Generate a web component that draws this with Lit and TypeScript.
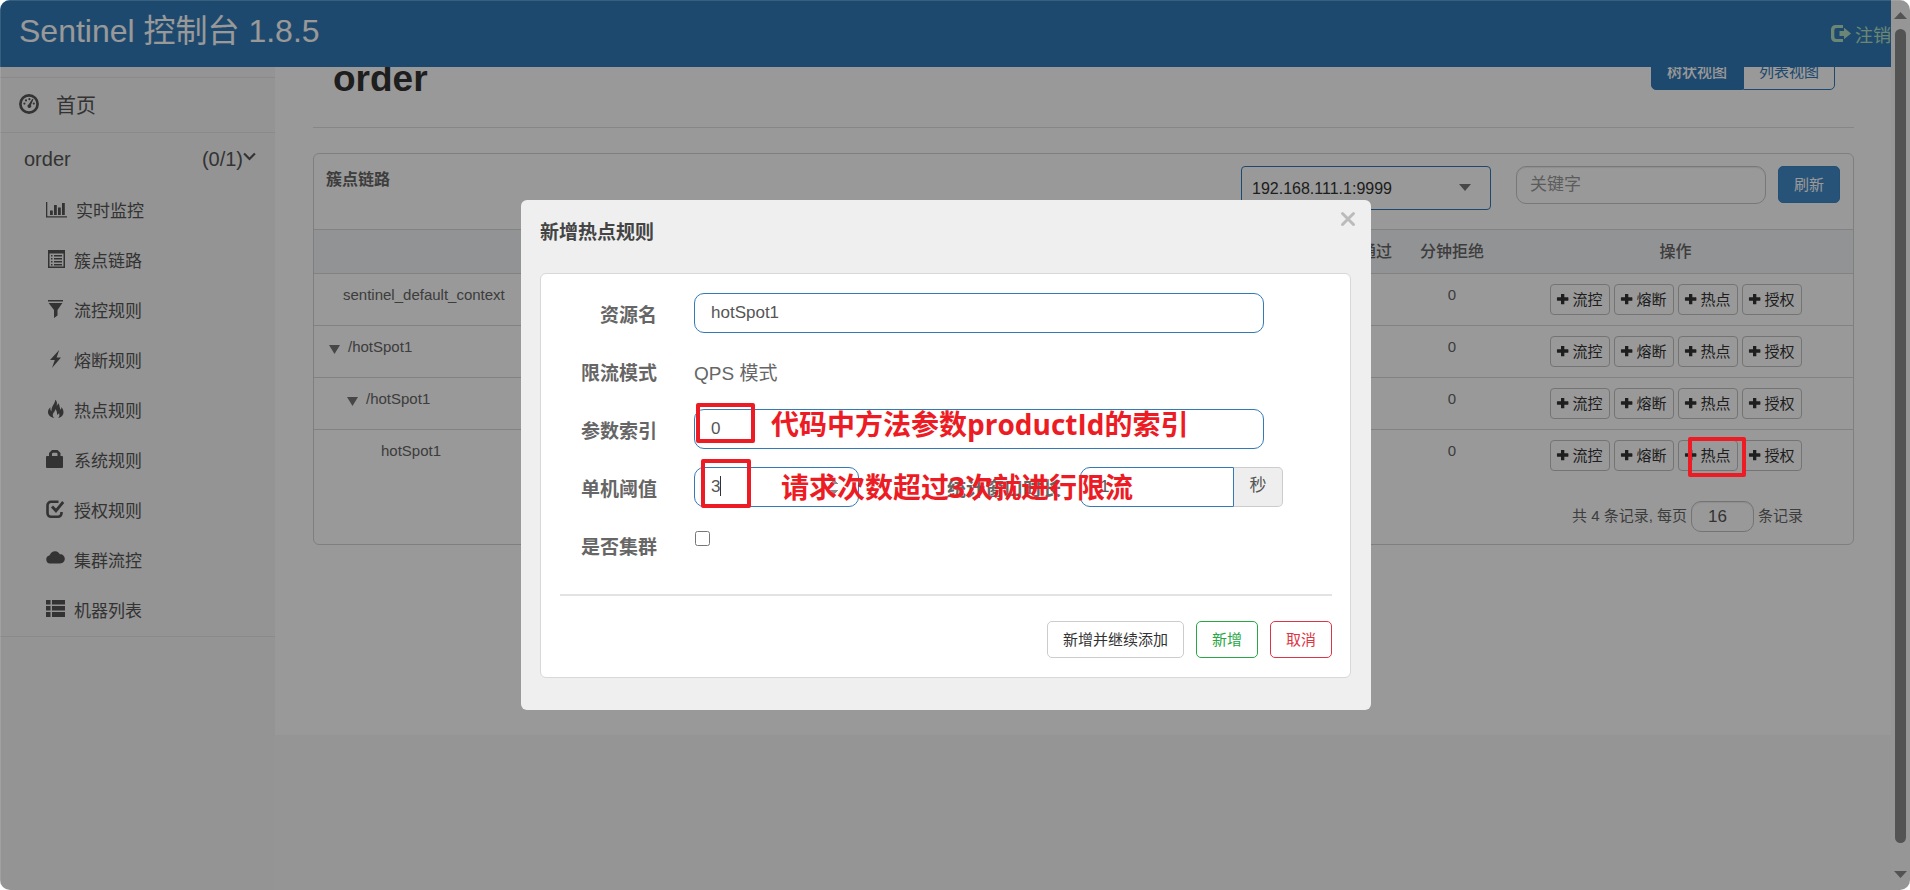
import { LitElement, html, css, svg } from "lit";
import { customElement, state } from "lit/decorators.js";

const cjk = css`"Liberation Sans", "Noto Sans CJK SC", sans-serif`;

const icons = {
  dashboard: svg`<circle cx="10" cy="10" r="8.6" fill="none" stroke="currentColor" stroke-width="2.7"/><circle cx="5.4" cy="9.6" r="1.1"/><circle cx="7" cy="6.4" r="1.1"/><circle cx="10.4" cy="5.2" r="1.1"/><circle cx="14.8" cy="9.6" r="1.1"/><path d="M13.4 4.8l1 .6-2.4 5.6a1.9 1.9 0 1 1-2.2-.8z"/>`,
  chart: svg`<path d="M0 3h1.3v14.2H21v1.3H0zM4 11.5h2.8V16H4zM8 6h2.8v10H8zM12 8.5h2.8V16H12zM16 4h2.8v12H16z"/>`,
  list: svg`<path fill-rule="evenodd" d="M2 1h17v18H2zM3.5 4.5v13h14v-13zM5 6h1.5v1.5H5zM8 6h8v1.5H8zM5 9h1.5v1.5H5zM8 9h8v1.5H8zM5 12h1.5v1.5H5zM8 12h8v1.5H8zM5 15h1.5v1.5H5zM8 15h8v1.5H8z"/>`,
  filter: svg`<path d="M2 1h15v1.6H2zM2.6 4h13.8l-4.9 7v5.6L8 19v-8z"/>`,
  flash: svg`<path d="M13.2 1L4 11h4.8L6 19l9-10.5h-4.4z"/>`,
  fire: svg`<path d="M8.500 19C4.800 18.600 2 16.400 2 13c0-2.200 1.200-3.600 2.400-4.800C4.200 10 4.400 11.400 5.500 12.300 5.200 7.500 8.800 5 9.300.8c2.400 2.200 1.600 4.400 1.400 6 .9-.6 1.300-1.600 1.300-2.800 2 2 1.300 4.600 2.600 6.800.7-.7.9-1.700.7-2.800 1.500 1.500 2.200 3.400 2.200 5.300 0 3-2.200 5.200-5.400 5.700 1.400-1.400 1.700-3 .9-4.800-.5.900-1.200 1.300-2 1.500.2-2.300-.2-4-1.800-5.700.2 2.600-2.400 3.600-2.400 6.200 0 1.100.6 2 1.700 2.800z"/>`,
  lock: svg`<path fill-rule="evenodd" d="M3 7V4l3-3h5.500l3 3v3H16a1 1 0 0 1 1 1v10a1 1 0 0 1-1 1H1a1 1 0 0 1-1-1V8a1 1 0 0 1 1-1zm3 0h5.500V4.500l-.8-.8H6.800L6 4.500z"/>`,
  check: svg`<path fill="none" stroke="currentColor" stroke-width="2.600" d="M12.500 2.800H5A3.500 3.500 0 0 0 1.500 6.300v8A3.500 3.500 0 0 0 5 17.800h7a3.500 3.500 0 0 0 3.500-3.500V13"/><path d="M5 8.500L7 6.600l3 2.800L16.200 2 18.200 4 10 14z"/>`,
  cloud: svg`<path d="M4 14.500A4 4 0 0 1 3.400 6.600C4.800 3.500 7 2 9.300 2.200c2.200.2 3.800 1.600 4.500 3 2.600-.5 5 1.800 5 4.600 0 2.600-2 4.700-4.800 4.700z"/>`,
  rows: svg`<path d="M0 1h4.500v4.500H0zM6 1h13v4.500H6zM0 7h4.500v4.500H0zM6 7h13v4.500H6zM0 13h4.500v5H0zM6 13h13v5H6z"/>`,
  logout: svg`<path fill-rule="evenodd" d="M12.500 1H5a4.500 4.500 0 0 0-4.500 4.500v8A4.500 4.500 0 0 0 5 18h7.500v-3H6a2.200 2.200 0 0 1-2.200-2.200V6.200A2.200 2.200 0 0 1 6 4h6.500zM13.500 3.700L20.500 9.500l-7 5.800V12H9V7h4.500z"/>`,
  plus: svg`<path d="M7.500 2.500h5v5H18a.6.6 0 0 1 .6.6v3.800a.6.6 0 0 1-.6.600h-5.500v5.500H7.500V12.500H2a.6.6 0 0 1-.6-.6V8.100A.6.6 0 0 1 2 7.500h5.500z"/>`,
};

const icon = (name: keyof typeof icons, cls = "icon") =>
  html`<svg class=${cls} viewBox="0 0 21 20" fill="currentColor" aria-hidden="true">${icons[name]}</svg>`;

const base = css`
  *, *::before, *::after { box-sizing: border-box; }
  button, input, select { font-family: inherit; margin: 0; color: inherit; }
  button { display: flex; align-items: center; justify-content: center; cursor: pointer; white-space: nowrap; }
  a { color: inherit; text-decoration: none; }
`;

@customElement("side-nav")
class SideNav extends LitElement {
  static styles = [base, css`
    :host { display: block; width: 275px; flex: none; padding-top: 77px; color: #555; background: #f7f7f7; }
    .home { display: flex; align-items: center; gap: 16px; height: 56px; padding: 0 19px 2px; border-top: 1px solid #e7e7e7; border-bottom: 1px solid #e7e7e7; font-size: 20px; }
    .group { display: flex; align-items: center; height: 53px; padding: 0 19px 0 24px; font-size: 20px; }
    .count { margin-left: auto; }
    .chevron { width: 13px; height: 22px; fill: none; stroke: currentColor; stroke-width: 2; }
    .menu { margin: 0; padding: 0; list-style: none; border-bottom: 1px solid #e7e7e7; }
    .link { display: flex; align-items: center; gap: 7px; height: 50px; padding: 0 0 4px 46px; font-size: 17px; }
    .wide { gap: 9px; }
    .icon { width: 21px; height: 20px; }
  `];

  private items: [keyof typeof icons, string][] = [
    ["chart", "实时监控"], ["list", "簇点链路"], ["filter", "流控规则"],
    ["flash", "熔断规则"], ["fire", "热点规则"], ["lock", "系统规则"],
    ["check", "授权规则"], ["cloud", "集群流控"], ["rows", "机器列表"],
  ];

  render() {
    return html`
      <nav>
        <a class="home" href="#home">${icon("dashboard")}<span>首页</span></a>
        <a class="group" href="#order"><span>order</span><span class="count">(0/1)</span>
          <svg class="chevron" viewBox="0 0 12 20" aria-hidden="true"><path d="M1 4l5 5 5-5"/></svg></a>
        <ul class="menu">
          ${this.items.map(([name, label]) => html`
            <li><a class="link ${name === "chart" ? "wide" : ""}" href="#${name}">${icon(name)}<span>${label}</span></a></li>`)}
        </ul>
      </nav>`;
  }
}

@customElement("resource-page")
class ResourcePage extends LitElement {
  static styles = [base, css`
    :host { display: block; flex: 1; min-width: 0; align-self: flex-start; background: #fff; color: #666; padding: 54px 37px 190px 38px; font-size: 15px; }
    .heading { display: flex; justify-content: space-between; align-items: flex-start; padding: 0 19px 37px 20px; border-bottom: 1px solid #e0e0e0; }
    .title { margin: 0; font-size: 37px; line-height: 50px; height: 36px; color: #333; }
    .views { display: flex; }
    .view { height: 36px; padding: 0 15px 4px; font-size: 15px; border: 1px solid #337ab7; border-radius: 0 5px 5px 0; background: #fff; color: #337ab7; }
    .current { border-radius: 5px 0 0 5px; background: #337ab7; color: #fff; font-weight: 500; }
    .panel { margin-top: 25px; border: 1px solid #d4d4d4; border-radius: 6px; }
    .tools { display: flex; align-items: flex-start; height: 75px; padding: 12px 13px 0 12px; }
    .caption { margin: 0 auto 0 0; font-size: 16px; line-height: 28px; font-weight: 700; }
    .pick { position: relative; margin-right: 25px; }
    .machine { appearance: none; width: 250px; height: 44px; padding: 0 10px; border: 1px solid #337ab7; border-radius: 4px; background: #fff; color: #333; font-size: 16px; }
    .caret { position: absolute; right: 20px; top: 18px; width: 12px; height: 7px; fill: #777; pointer-events: none; }
    .keyword { width: 250px; height: 38px; margin-right: 12px; padding: 0 13px; border: 1px solid #c8c8c8; border-radius: 10px; box-shadow: inset 0 1px 1px rgba(0, 0, 0, 0.08); background: #fff; font-size: 17px; }
    .keyword::placeholder { color: #999; opacity: 1; }
    .refresh { width: 62px; height: 37px; padding: 0 0 2px; border: 1px solid #3b85c4; border-radius: 5px; background: #428bca; color: #fff; font-size: 15px; }
    .grid { width: 100%; table-layout: fixed; border-collapse: collapse; }
    .grid th { height: 44px; padding: 0 0 4px; border-top: 1px solid #d9d9d9; background: #f3f5f8; font-size: 16px; font-weight: 500; }
    .grid td { height: 52px; padding: 12px 0 0; border-top: 1px solid #d9d9d9; vertical-align: top; text-align: center; line-height: 18px; }
    .num { width: 92px; }
    .ops { width: 355px; }
    .grid .name { text-align: left; }
    .node { display: flex; align-items: center; gap: 8px; }
    .depth0 { padding-left: 29px; }
    .depth1 { padding-left: 15px; }
    .depth2 { padding-left: 33px; }
    .depth3 { padding-left: 67px; }
    .tri { width: 11px; height: 10px; margin-top: 3px; fill: #777; }
    .grid .actions { padding-top: 10px; }
    .buttons { display: flex; justify-content: center; gap: 4px; }
    .op { gap: 2px; width: 60px; height: 31px; padding: 0 0 2px; border: 1px solid #c2c2c2; border-radius: 4px; background: #fff; color: #333; font-size: 15px; }
    .icon { width: 14px; height: 14px; }
    .pager { display: flex; justify-content: flex-end; align-items: center; gap: 4px; height: 62px; padding: 8px 50px 0 0; }
    .size { width: 63px; height: 31px; padding: 0 18px 0 16px; border: 1px solid #c2c2c2; border-radius: 10px; box-shadow: inset 0 1px 1px rgba(0, 0, 0, 0.08); background: #fff; color: #555; font-size: 17px; }
    .text { padding-bottom: 4px; }
  `];

  private nodes = [
    { name: "sentinel_default_context", depth: 0 },
    { name: "/hotSpot1", depth: 1 },
    { name: "/hotSpot1", depth: 2 },
    { name: "hotSpot1", depth: 3 },
  ];

  render() {
    return html`
      <header class="heading">
        <h1 class="title">order</h1>
        <div class="views"><button class="view current">树状视图</button><button class="view">列表视图</button></div>
      </header>
      <section class="panel">
        <div class="tools">
          <h2 class="caption">簇点链路</h2>
          <div class="pick">
            <select class="machine" aria-label="机器"><option>192.168.111.1:9999</option></select>
            <svg class="caret" viewBox="0 0 12 7"><path d="M0 0h12L6 7z"/></svg>
          </div>
          <input class="keyword" placeholder="关键字" aria-label="关键字">
          <button class="refresh">刷新</button>
        </div>
        <table class="grid">
          <thead><tr><th></th><th class="num">分钟通过</th><th class="num">分钟拒绝</th><th class="ops">操作</th></tr></thead>
          <tbody>
            ${this.nodes.map((n) => html`<tr>
              <td class="name"><div class="node depth${n.depth}">
                ${n.depth === 1 || n.depth === 2 ? html`<svg class="tri" viewBox="0 0 11 10"><path d="M0 1h11L5.500 10z"/></svg>` : ""}
                <span>${n.name}</span></div></td>
              <td></td>
              <td>0</td>
              <td class="actions"><div class="buttons">
                ${["流控", "熔断", "热点", "授权"].map((t) => html`<button class="op">${icon("plus")}<span>${t}</span></button>`)}
              </div></td>
            </tr>`)}
          </tbody>
        </table>
        <div class="pager">
          <label class="text" for="size">共 4 条记录, 每页</label>
          <input id="size" class="size" value="16">
          <span class="text">条记录</span>
        </div>
      </section>`;
  }
}

@customElement("rule-dialog")
class RuleDialog extends LitElement {
  static styles = [base, css`
    :host { display: block; position: relative; width: 850px; padding: 0 20px 32px 19px; border-radius: 6px; background: #efefef; color: #666; font-size: 19px; }
    .top { display: flex; justify-content: space-between; height: 73px; }
    .title { margin: 0; font-size: 19px; line-height: 66px; color: #444; }
    .close { width: 16px; height: 16px; margin: 11px -5px 0 0; padding: 0; border: 0; background: none; }
    .cross { width: 16px; height: 16px; fill: none; stroke: #bbb; stroke-width: 3; stroke-linecap: round; }
    .card { padding: 10px 18px 19px 19px; border: 1px solid #d8d8d8; border-radius: 6px; background: #fff; }
    .row { display: grid; grid-template-columns: 97px 1fr; column-gap: 37px; align-items: center; height: 58px; }
    .label { font-weight: 700; text-align: right; white-space: nowrap; }
    .field { width: 570px; height: 40px; padding: 0 16px 1px; border: 1px solid #337ab7; border-radius: 10px; background: #fff; color: #555; font-size: 17px; outline: 0; }
    .pair { position: relative; display: flex; align-items: center; }
    .count { width: 165px; }
    .count::-webkit-inner-spin-button { opacity: 1; }
    .span { width: 221px; padding-right: 19px; }
    .window { width: 154px; padding-left: 19px; border-radius: 10px 0 0 10px; }
    .unit { width: 49px; height: 40px; line-height: 36px; border: 1px solid #ccc; border-left: 0; border-radius: 0 5px 5px 0; background: #eee; color: #555; font-size: 17px; text-align: center; }
    .cursor { position: absolute; left: 26px; top: 9px; width: 1px; height: 20px; background: #333; }
    .tick { width: 15px; height: 15px; margin: 0 0 14px 1px; }
    .rule { height: 2px; margin: 20px 0 25px; border: 0; background: #e3e3e3; }
    .actions { display: flex; justify-content: flex-end; gap: 12px; }
    .btn { height: 37px; padding: 0 15px 2px; border: 1px solid #ccc; border-radius: 5px; background: #fff; color: #333; font-size: 15px; }
    .ok { border-color: #28a745; color: #28a745; }
    .cancel { border-color: #dc3545; color: #dc3545; }
    .mark { position: absolute; border: 4px solid #ed1c24; border-radius: 2px; }
    .mark-index { left: 175px; top: 203px; width: 59px; height: 40px; }
    .mark-count { left: 180px; top: 259px; width: 50px; height: 49px; }
    .note { position: absolute; margin: 0; color: #ed1c24; font: 700 28px/40px "Open Sans", "Noto Sans CJK SC", sans-serif; white-space: nowrap; }
    .note-index { left: 250px; top: 204px; }
    .note-count { left: 260px; top: 267px; }
  `];

  @state() private resource = "hotSpot1";

  render() {
    return html`
      <header class="top">
        <h2 class="title">新增热点规则</h2>
        <button class="close" aria-label="关闭"><svg class="cross" viewBox="0 0 16 16"><path d="M2.500 2.500l11 11M13.500 2.500l-11 11"/></svg></button>
      </header>
      <form class="card" @submit=${(e: Event) => e.preventDefault()}>
        <div class="row"><label class="label" for="res">资源名</label><input id="res" class="field" .value=${this.resource}></div>
        <div class="row"><span class="label">限流模式</span><span>QPS 模式</span></div>
        <div class="row"><label class="label" for="idx">参数索引</label><input id="idx" class="field" value="0"></div>
        <div class="row"><label class="label" for="cnt">单机阈值</label>
          <div class="pair">
            <input id="cnt" class="field count" type="number" value="3"><i class="cursor"></i>
            <label class="label span" for="win">统计窗口时长</label>
            <input id="win" class="field window" value="1"><span class="unit">秒</span>
          </div>
        </div>
        <div class="row"><label class="label" for="clu">是否集群</label><input id="clu" class="tick" type="checkbox"></div>
        <hr class="rule">
        <div class="actions">
          <button class="btn">新增并继续添加</button><button class="btn ok">新增</button><button class="btn cancel">取消</button>
        </div>
      </form>
      <div class="mark mark-index"></div>
      <p class="note note-index">代码中方法参数productId的索引</p>
      <div class="mark mark-count"></div>
      <p class="note note-count">请求次数超过3次就进行限流</p>`;
  }
}

@customElement("app-root")
class AppRoot extends LitElement {
  static styles = [base, css`
    :host { display: block; height: 100vh; background: #fff; font-family: ${cjk}; }
    .window { position: relative; display: flex; height: 100%; overflow: hidden; border-radius: 10px; background: #f8f8f8; }
    .page { position: relative; display: flex; flex: 1; min-width: 0; overflow: hidden; }
    .bar { position: absolute; z-index: 1; top: 0; left: 0; right: 0; display: flex; justify-content: space-between; height: 67px; padding-left: 19px; background: #337ab7; color: #fff; white-space: nowrap; }
    .brand { font-size: 32px; line-height: 62px; }
    .logout { display: flex; align-items: center; gap: 3px; height: 68px; color: #b5e0c4; font-size: 18px; }
    .icon { width: 22px; height: 20px; }
    .scroll { display: flex; flex-direction: column; align-items: center; width: 19px; padding: 12px 0; background: #fafafa; }
    .arrow { width: 13px; height: 7px; fill: #8a8a8a; }
    .thumb { flex: 1; width: 11px; margin: 10px 0 28px; border-radius: 6px; background: #8a8a8a; }
    .shade { position: absolute; z-index: 2; inset: 0; display: flex; justify-content: center; align-items: flex-start; padding: 200px 18px 0 0; background: rgba(0, 0, 0, 0.4); box-shadow: inset 1px 1px rgba(255, 255, 255, 0.12); }
    .mark { position: absolute; right: 164px; top: 437px; width: 58px; height: 40px; border: 4px solid #ed1c24; border-radius: 2px; }
  `];

  render() {
    return html`
      <div class="window">
        <div class="page">
          <header class="bar">
            <a class="brand" href="#top">Sentinel 控制台 1.8.5</a>
            <a class="logout" href="#logout">${icon("logout")}<span>注销</span></a>
          </header>
          <side-nav></side-nav>
          <resource-page></resource-page>
        </div>
        <div class="scroll">
          <svg class="arrow" viewBox="0 0 13 7"><path d="M0 7h13L6.500 0z"/></svg>
          <div class="thumb"></div>
          <svg class="arrow" viewBox="0 0 13 7"><path d="M0 0h13L6.500 7z"/></svg>
        </div>
        <div class="shade"><rule-dialog role="dialog" aria-label="新增热点规则"></rule-dialog><div class="mark"></div></div>
      </div>`;
  }
}
